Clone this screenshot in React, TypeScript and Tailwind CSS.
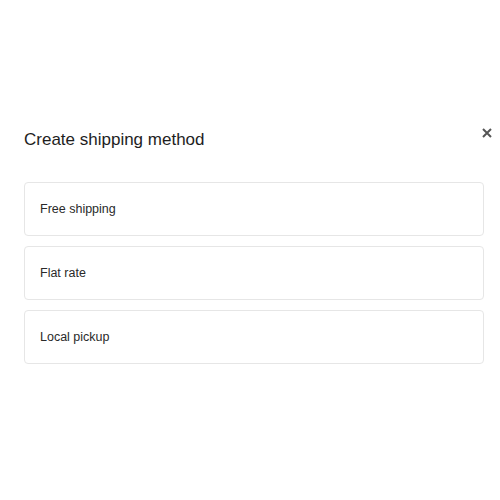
const METHODS = ["Free shipping", "Flat rate", "Local pickup"];

export default function App() {
  return (
    <div className="h-[500px] w-[500px] overflow-hidden bg-white font-['Liberation_Sans',Arial,sans-serif]">
      <div className="pl-6 pt-[128px]">
        <div className="flex w-[468px] items-center justify-between">
          <h1 className="text-[17px] leading-6 text-[#1e1e1e]">Create shipping method</h1>
          <button type="button" aria-label="Close" className="-mt-[14px] text-[#555]">
            <svg width="10" height="10" viewBox="0 0 10 10" fill="none" stroke="currentColor" strokeWidth="2">
              <path d="M1 1l8 8M9 1l-8 8" />
            </svg>
          </button>
        </div>
        <div className="mt-[30px] flex w-[460px] flex-col gap-[10px]">
          {METHODS.map((m) => (
            <button
              key={m}
              type="button"
              className="flex h-[54px] items-center rounded-[4px] border border-[#e6e6e6] px-[15px] text-left text-[12.5px] text-[#2a2a2a]"
            >
              {m}
            </button>
          ))}
        </div>
      </div>
    </div>
  );
}
